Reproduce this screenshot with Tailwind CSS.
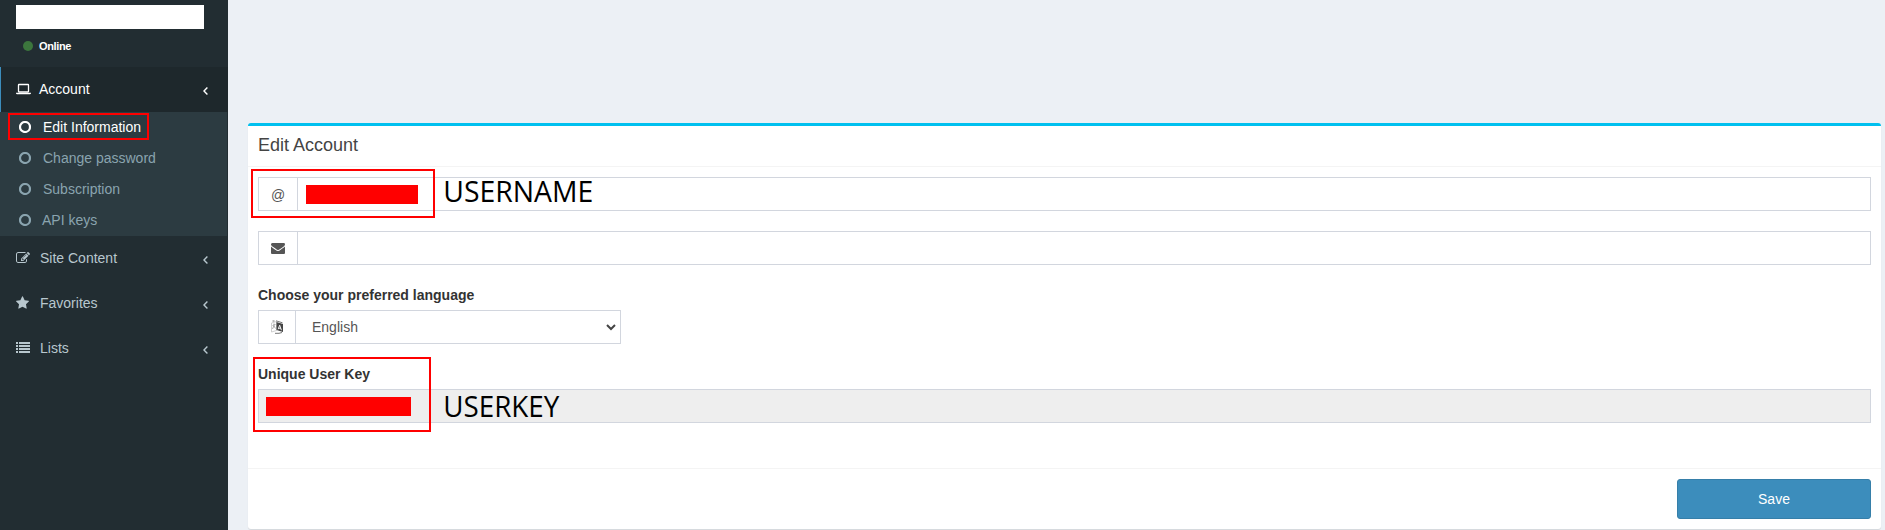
<!DOCTYPE html>
<html lang="en">
<head>
<meta charset="utf-8">
<title>Edit Account</title>
<script src="https://cdn.jsdelivr.net/npm/@tailwindcss/browser@4"></script>
</head>
<body class="relative flex h-[530px] w-[1885px] overflow-hidden bg-[#ecf0f5] font-['Liberation_Sans',Arial,sans-serif] text-sm leading-5 text-[#333]">
<svg class="hidden">
  <symbol id="angle" viewBox="0 0 5 8"><path d="M4.400 .6 1 4l3.400 3.400" fill="none" stroke="currentColor" stroke-width="1.400"/></symbol>
  <symbol id="ring" viewBox="0 0 12 12"><circle cx="6" cy="6" r="5" fill="none" stroke="currentColor" stroke-width="2.200"/></symbol>
</svg>

<aside class="flex w-[228px] shrink-0 flex-col bg-[#222d32] text-[#b8c7ce]">
  <div class="h-[67px] pt-[5px] pl-4">
    <div class="h-6 w-[188px] bg-white"></div>
    <div class="mt-[7px] ml-[7px] flex items-center gap-1.5 text-[11px] font-bold tracking-[-0.35px] text-white"><span class="size-[10px] rounded-full bg-[#3c763d]"></span>Online</div>
  </div>
  <nav>
    <a class="flex h-[45px] items-center border-l border-[#3c8dbc] bg-[#1e282c] pr-5 pb-0.5 pl-[15px] text-white">
      <svg class="h-3 w-[15px]" viewBox="0 0 15 12"><rect x="2.500" y="1.500" width="10" height="7.500" rx=".5" fill="none" stroke="currentColor" stroke-width="1.300"/><path d="M0 9.700h15v.6q0 1-1.200 1H1.200Q0 11.300 0 10.300z" fill="currentColor"/></svg>
      <span class="ml-2">Account</span><svg class="mt-1 ml-auto h-2 w-[5px]"><use href="#angle"/></svg>
    </a>
    <div class="mr-px bg-[#2c3b41] pl-[19px] text-[#8aa4af]">
      <a class="flex h-[31px] items-center gap-3 pb-0.5 text-white"><svg class="mt-px size-3"><use href="#ring"/></svg>Edit Information</a>
      <a class="flex h-[31px] items-center gap-3 pb-0.5"><svg class="mt-px size-3"><use href="#ring"/></svg>Change password</a>
      <a class="flex h-[31px] items-center gap-3 pb-0.5"><svg class="mt-px size-3"><use href="#ring"/></svg>Subscription</a>
      <a class="flex h-[31px] items-center gap-[11px] pb-0.5"><svg class="mt-px size-3"><use href="#ring"/></svg>API keys</a>
    </div>
    <a class="flex h-[45px] items-center pr-5 pb-0.5 pl-4">
      <svg class="size-[14px]" viewBox="0 0 1792 1792" fill="currentColor"><path d="M888 1184l116-116-152-152-116 116v56h96v96h56zm440-720q-16-16-33 1l-350 350q-17 17-1 33t33-1l350-350q17-17 1-33zm80 594v190q0 119-84.500 203.500t-203.500 84.500h-832q-119 0-203.500-84.500t-84.500-203.500v-832q0-119 84.500-203.500t203.500-84.500h832q63 0 117 25 15 7 18 23 3 17-9 29l-49 49q-14 14-32 8-23-6-45-6h-832q-66 0-113 47t-47 113v832q0 66 47 113t113 47h832q66 0 113-47t47-113v-126q0-13 9-22l64-64q15-15 35-7t20 29zm-96-738l288 288-672 672h-288v-288zm444 132l-92 92-288-288 92-92q28-28 68-28t68 28l152 152q28 28 28 68t-28 68z"/></svg>
      <span class="ml-2.5">Site Content</span><svg class="mt-1 ml-auto h-2 w-[5px]"><use href="#angle"/></svg>
    </a>
    <a class="flex h-[45px] items-center pr-5 pb-0.5 pl-4">
      <svg class="h-[14px] w-[13px]" viewBox="64 0 1664 1792" fill="currentColor"><path d="M1728 647q0 22-26 48l-363 354 86 500q1 7 1 20 0 21-10.500 35.500t-30.500 14.500q-19 0-40-12l-449-236-449 236q-22 12-40 12-21 0-31.500-14.500t-10.500-35.500q0-6 2-20l86-500-364-354q-25-27-25-48 0-37 56-46l502-73 225-455q19-41 49-41t49 41l225 455 502 73q56 9 56 46z"/></svg>
      <span class="ml-[11px]">Favorites</span><svg class="mt-1 ml-auto h-2 w-[5px]"><use href="#angle"/></svg>
    </a>
    <a class="flex h-[45px] items-center pr-5 pb-0.5 pl-4">
      <svg class="h-[11px] w-[14px]" viewBox="0 0 14 11" fill="currentColor"><path d="M0 0h2v2H0zM3 0h11v2H3zM0 3h2v2H0zM3 3h11v2H3zM0 6h2v2H0zM3 6h11v2H3zM0 9h2v2H0zM3 9h11v2H3z"/></svg>
      <span class="ml-2.5">Lists</span><svg class="mt-1 ml-auto h-2 w-[5px]"><use href="#angle"/></svg>
    </a>
  </nav>
</aside>

<main class="flex-1 pt-[123px] pr-1 pl-5">
  <section class="h-[406px] rounded-[3px] border-t-[3px] border-[#00c0ef] bg-white shadow-[0_1px_1px_rgba(0,0,0,0.1)]">
    <h3 class="h-[41px] border-b border-[#f4f4f4] px-2.5 pt-[9px] text-lg leading-5 text-[#444]">Edit Account</h3>
    <div class="h-[301px] px-2.5 pt-2.5">
      <div class="flex h-[34px] border border-[#d2d6de] text-[#555]">
        <div class="flex w-[39px] items-center justify-center border-r border-[#d2d6de] pt-0.5">@</div>
        <div class="flex items-center pl-2"><span class="h-[19px] w-28 bg-[#f00]"></span></div>
      </div>
      <div class="mt-5 flex h-[34px] border border-[#d2d6de] text-[#555]">
        <div class="flex w-[39px] items-center justify-center border-r border-[#d2d6de]">
          <svg class="size-[14px]" viewBox="0 0 1792 1792" fill="currentColor"><path d="M1792 710v794q0 66-47 113t-113 47h-1472q-66 0-113-47t-47-113v-794q44 49 101 87 362 246 497 345 57 42 92.500 65.500t94.500 48 110 24.500h2q51 0 110-24.500t94.500-48 92.500-65.500q170-123 498-345 57-39 100-87zm0-294q0 79-49 151t-122 123q-376 261-468 325-10 7-42.500 31t-54 38.500-52 32.500-57.500 27-50 9h-2q-23 0-50-9t-57.500-27-52-32.500-54-38.500-42.500-31q-91-64-262-182.500t-205-142.500q-62-42-117-115.500t-55-136.500q0-78 41.500-130t118.500-52h1472q65 0 112.500 47t47.500 113z"/></svg>
        </div>
      </div>
      <div class="mt-5 font-bold">Choose your preferred language</div>
      <div class="mt-[5px] flex h-[34px] w-[363px] border border-[#d2d6de] text-[#555]">
        <div class="flex w-[37px] items-center justify-center border-r border-[#d2d6de]">
          <svg class="h-[14px] w-3" viewBox="0 0 12 14"><path d="M.5 3 5.500 1.500v9L.5 12z" fill="none" stroke="#bbb" stroke-width=".7"/><path d="M1.500 1h2M5 .8l6.500 2M4 13.300h4l3-.8" fill="none" stroke="#777" stroke-width="1"/><path d="M1.500 5.500 4.500 4.500M3 3.500v2L1.500 9M3 6l1.500 2.500" fill="none" stroke="#888" stroke-width=".7"/><path d="m5.500 2 6.500 2v8l-6.500-2z" fill="#444"/><path d="m7.200 9.200 1.500-4 1.700 5M7.700 8l2 .6" fill="none" stroke="#fff" stroke-width=".9"/></svg>
        </div>
        <div class="flex flex-1 items-center justify-between pr-1 pl-4">English<svg class="h-2 w-[10px]" viewBox="0 0 10 8"><path d="m1 2 4 4 4-4" fill="none" stroke="#444" stroke-width="2"/></svg></div>
      </div>
      <div class="mt-5 font-bold">Unique User Key</div>
      <div class="mt-[5px] flex h-[34px] border border-[#d2d6de] bg-[#eee] pt-[7px] pl-[7px]"><span class="h-[19px] w-[145px] bg-[#f00]"></span></div>
    </div>
    <div class="flex justify-end border-t border-[#f4f4f4] p-2.5">
      <button class="h-10 w-[194px] rounded-[3px] border border-[#367fa9] bg-[#3c8dbc] text-white">Save</button>
    </div>
  </section>
</main>

<!-- annotations drawn over the page -->
<div class="absolute top-[113px] left-2 h-[27px] w-[141px] border-2 border-[#f00]"></div>
<div class="absolute top-[169px] left-[251px] h-[49px] w-[184px] border-2 border-[#f00]"></div>
<div class="absolute top-[357px] left-[253px] h-[75px] w-[178px] border-2 border-[#f00]"></div>
<svg class="absolute top-[170px] left-[440px] h-[260px] w-[170px] font-['Open_Sans','Noto_Sans',sans-serif] text-[29px]" fill="#000">
  <text x="3.300" y="32" textLength="150" lengthAdjust="spacingAndGlyphs">USERNAME</text>
  <text x="3.300" y="247" textLength="116" lengthAdjust="spacingAndGlyphs">USERKEY</text>
</svg>
</body>
</html>
